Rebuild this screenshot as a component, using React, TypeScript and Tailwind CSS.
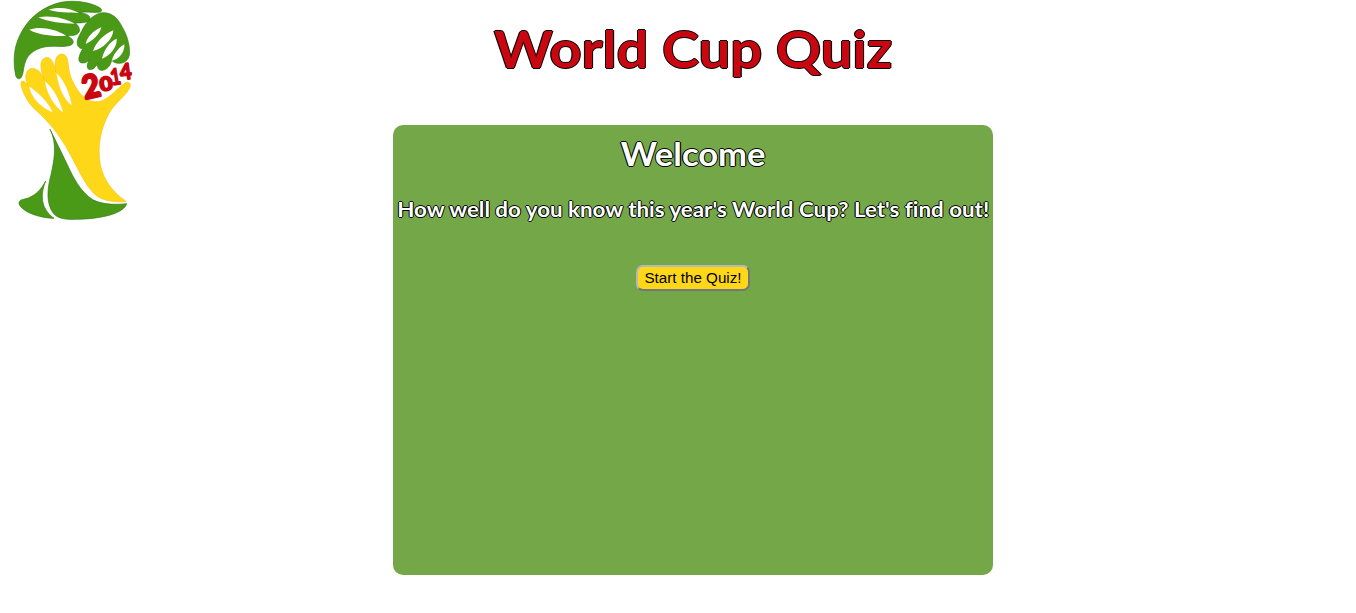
function Logo() {
  return (
    <svg viewBox="0 0 450 675" className="h-[225px] w-[150px]" role="img" aria-label="World Cup 2014">
      <g fill="#4b9a17" stroke="#2f7a12" strokeWidth="2" strokeLinejoin="round">
        <path d="M47 226C38 180 42 140 61 103C86 52 130 19 183 7C225 -2 282 9 303 26C308 33 303 37 294 37C276 38 255 34 238 38C258 40 271 46 270 56C269 66 252 69 226 69C235 77 240 85 238 94C234 106 216 108 199 107C213 112 222 120 219 129C215 140 190 140 164 139C126 137 91 151 78 180C69 200 72 218 64 232C58 240 49 236 47 226Z" />
        <path d="M232 132C230 120 237 108 244 95C258 67 277 45 302 39C331 34 353 52 366 80C381 104 391 137 388 165C385 180 374 190 356 190C347 190 340 186 335 181C331 197 321 210 306 211C295 211 291 203 293 190C287 202 278 211 267 208C259 205 261 193 267 180C261 187 252 191 242 188C232 183 237 164 249 145C241 147 234 142 232 132Z" />
        <path d="M150 388C168 424 184 456 202 494C220 532 240 575 280 600C311 615 349 614 380 611C371 640 308 657 226 658C194 659 171 656 158 637C139 608 141 568 153 524C163 479 172 431 150 388Z" />
        <path d="M137 543C122 580 119 624 162 655C113 653 66 635 57 611C57 600 65 599 74 597C105 590 124 568 137 543Z" />
      </g>
      <g fill="#fff">
        <path d="M146 29C173 19 212 24 237 39C208 37 174 38 146 29Z" />
        <path d="M115 52C151 45 194 54 224 71C187 70 146 67 115 52Z" />
        <path d="M88 89C121 78 165 87 199 107C157 110 114 104 88 89Z" />
        <path d="M257 132C260 112 281 91 304 82C300 102 279 122 257 132Z" />
        <path d="M279 153C286 130 311 102 340 91C338 119 310 145 279 153Z" />
        <path d="M306 176C311 150 329 125 350 116C352 139 332 166 306 176Z" />
        <path d="M335 182C343 158 357 143 373 133C375 154 359 178 335 182Z" />
      </g>
      <path fill="#ffd719" stroke="#f4c313" strokeWidth="2" strokeLinejoin="round" d="M64 245C69 240 78 247 85 258C72 234 76 213 91 206C109 201 127 219 134 241C122 211 117 186 132 175C148 166 161 180 167 216C163 188 166 168 180 163C197 159 203 173 205 195C207 228 222 256 240 280C258 302 282 310 304 303C336 290 352 263 377 248C388 244 394 251 389 263C378 289 345 306 326 342C302 388 291 439 301 494C311 544 343 580 379 605C344 607 309 604 284 583C250 549 231 498 205 453C181 408 147 366 108 331C79 306 58 256 64 245Z" />
      <g fill="#fff" stroke="#f4c313" strokeWidth="1">
        <path d="M87 258C114 276 145 305 159 338C126 326 91 293 87 258Z" />
        <path d="M134 242C161 263 180 301 190 338C163 321 139 281 134 242Z" />
        <path d="M169 218C196 243 210 282 216 318C190 299 173 257 169 218Z" />
      </g>
      <g fill="#c90711" fontFamily="'Lato', sans-serif" fontWeight="700" stroke="#c90711" strokeLinejoin="round" strokeLinecap="round">
        <text transform="translate(255 298) rotate(-13)" fontSize="96" strokeWidth="8" textLength="52" lengthAdjust="spacingAndGlyphs">2</text>
        <text transform="translate(302 274) rotate(-8)" fontSize="56" strokeWidth="6" textLength="38" lengthAdjust="spacingAndGlyphs">0</text>
        <text transform="translate(335 256) rotate(-9)" fontSize="67" strokeWidth="5" textLength="30" lengthAdjust="spacingAndGlyphs">1</text>
        <text transform="translate(362 240) rotate(-7)" fontSize="66" strokeWidth="5" textLength="35" lengthAdjust="spacingAndGlyphs">4</text>
      </g>
    </svg>
  );
}

export default function App() {
  return (
    <div className="flex h-[613px] items-start overflow-hidden bg-white font-['Lato',sans-serif]">
      <Logo />
      <main className="ml-[243px] flex w-[600px] flex-col items-center">
        <h1 className="mt-[17px] origin-center scale-x-110 text-[51px] leading-[64px] font-bold whitespace-nowrap text-[#c90711] [text-shadow:-1px_0_0_#000,1px_0_0_#000,0_-1px_0_#000,0_1px_0_#000]">
          World Cup Quiz
        </h1>
        <section className="mt-[44px] flex h-[450px] w-[600px] flex-col items-center rounded-[10px] bg-[#74a748] text-white">
          <h2 className="mt-[9px] scale-x-108 text-[32px] leading-[40px] font-bold whitespace-nowrap [text-shadow:-1px_0_0_#000,1px_0_0_#000,0_-1px_0_#000,0_1px_0_#000]">
            Welcome
          </h2>
          <p className="mt-[21px] scale-x-[1.064] text-[21px] leading-[28px] font-bold whitespace-nowrap [font-variant-ligatures:none] [text-shadow:-1px_0_0_#000,1px_0_0_#000,0_-1px_0_#000,0_1px_0_#000]">
            How well do you know this year's World Cup? Let's find out!
          </p>
          <button className="mt-[42px] h-[26px] w-[114px] rounded-[7px] border-2 border-t-[#b8b8b8] border-r-[#767676] border-b-[#767676] border-l-[#b8b8b8] bg-[#ffd719] font-['Liberation_Sans',sans-serif] text-[15.2px] leading-[20px] whitespace-nowrap text-black">
            Start the Quiz!
          </button>
        </section>
      </main>
    </div>
  );
}
